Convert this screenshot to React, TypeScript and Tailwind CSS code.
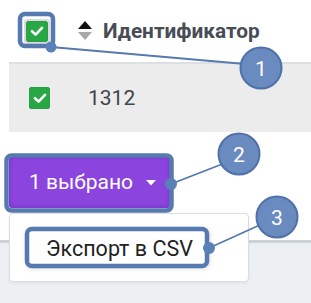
import React from "react";

function Check({ w, h }: { w: number; h: number }) {
  return (
    <div
      className="flex items-center justify-center rounded-[2px] bg-[#28a745] border border-[#2a9d48]"
      style={{ width: w, height: h }}
    >
      <svg width="14" height="12" viewBox="0 0 14 12">
        <path d="M2 6.2 L5.6 9.6 L12 2.8" fill="none" stroke="white" strokeWidth="2.6" strokeLinecap="round" strokeLinejoin="round" />
      </svg>
    </div>
  );
}

export default function App() {
  const blue = "#5679b0";
  return (
    <div
      className="relative w-[311px] h-[303px] overflow-hidden bg-white"
      style={{ fontFamily: "Roboto, 'Liberation Sans', sans-serif" }}
    >
      {/* header */}
      <div className="flex items-center h-[62px] pl-[26px]">
        <div className="rounded-[3px] border-[2px] border-[#dcdcdc] -m-[2px]">
          <Check w={22} h={21} />
        </div>
        <svg className="ml-[30px]" width="14" height="20" viewBox="0 0 14 20">
          <path d="M7 0 L14 8 L0 8 Z" fill="#111" />
          <path d="M0 11 L14 11 L7 19 Z" fill="#a9a9a9" />
        </svg>
        <span className="ml-[11px] text-[20.8px] font-bold text-[#474c55] leading-none">Идентификатор</span>
      </div>
      {/* row */}
      <div className="ml-[9px] h-[70px] bg-[#ececec] border-t-2 border-[#dde0e3] flex items-center pl-[20px]">
        <Check w={21} h={22} />
        <span className="ml-[38px] text-[21px] text-[#3f444b] leading-none">1312</span>
      </div>
      {/* button */}
      <div className="mt-[25px] ml-[9px] w-[161px] h-[51px] rounded-[3px] bg-[#8b44dd] flex items-center pl-[20px] text-white shadow-[inset_0_0_4px_rgba(60,0,120,0.35)]">
        <span className="text-[21px] leading-none">1 выбрано</span>
        <svg className="ml-[13px] mt-[1px]" width="10" height="6" viewBox="0 0 10 6">
          <path d="M0 0 L10 0 L5 5.5 Z" fill="white" />
        </svg>
      </div>
      {/* bottom strip */}
      <div className="mt-[32px] h-[63px] bg-[#edf0f3] border-t-[3px] border-[#cdd2d8]" />

      {/* dropdown menu */}
      <div className="absolute left-[9px] top-[213px] w-[240px] h-[69px] bg-white border border-[#dadde1] rounded-[4px] shadow-[0_1px_3px_rgba(0,0,0,0.06)]">
        <div className="absolute left-[18px] top-[16px] w-[180px] h-[37px] bg-white shadow-[0_0_6px_rgba(0,0,0,0.25)]" />
        <span className="absolute left-[36px] top-[24px] text-[21.5px] leading-none text-[#222]">Экспорт в CSV</span>
      </div>

      {/* annotations */}
      <svg className="absolute left-0 top-0" width="311" height="303" viewBox="0 0 311 303">
        <g fill="none" stroke={blue} strokeWidth="4.5">
          <rect x="20" y="14" width="33" height="32" rx="5" />
          <rect x="6.5" y="155.5" width="165" height="55" rx="5" />
          <rect x="27" y="229" width="180" height="37" rx="5" />
        </g>
        <g stroke={blue} strokeWidth="1.8">
          <line x1="51" y1="47" x2="245" y2="64" />
          <line x1="171" y1="184" x2="225" y2="163" />
          <line x1="209" y1="248" x2="262" y2="224" />
        </g>
        <g fill="#5b80b8">
          <circle cx="51" cy="47" r="5.5" />
          <circle cx="171" cy="184" r="6" />
          <circle cx="209" cy="248" r="6" />
        </g>
        <g fill="#6a8bbf" stroke="#4f71a7" strokeWidth="2">
          <circle cx="261" cy="68" r="20.5" />
          <circle cx="239" cy="154" r="20.5" />
          <circle cx="277" cy="217" r="20.5" />
        </g>
        <g fill="white" fontSize="21" textAnchor="middle" fontFamily="Roboto, sans-serif">
          <text x="261" y="75.5">1</text>
          <text x="239" y="161.5">2</text>
          <text x="277" y="224.5">3</text>
        </g>
      </svg>
    </div>
  );
}
